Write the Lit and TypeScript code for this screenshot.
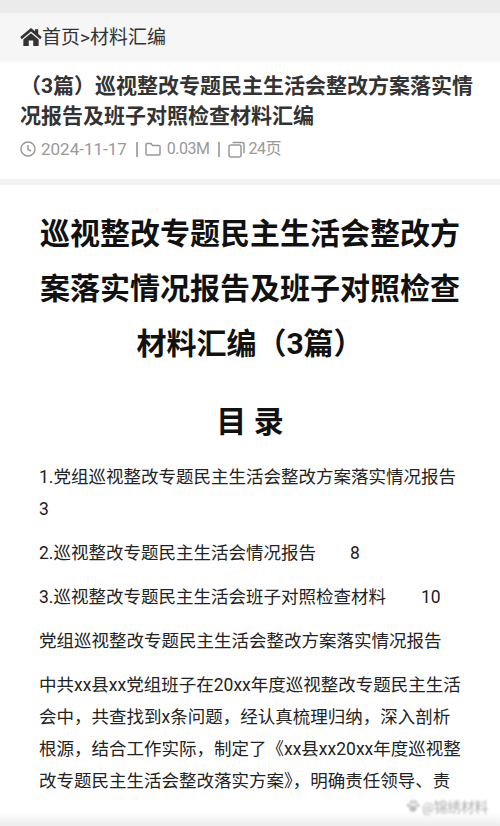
import { LitElement, html, css } from "lit";
import { customElement } from "lit/decorators.js";

@customElement("app-root")
export class AppRoot extends LitElement {
  static styles = css`
    :host {
      display: block;
      width: 500px;
      height: 826px;
      overflow: hidden;
      position: relative;
      background: #fff;
      font-family: Roboto, "Noto Sans CJK SC", sans-serif;
    }
    .top { height: 13px; background: #ebebeb; }
    .crumb {
      height: 49px;
      box-sizing: border-box;
      background: #f6f6f6;
      display: flex;
      align-items: center;
      padding: 0 0 0 20px;
      font-size: 19px;
      line-height: 24px;
      color: #333;
    }
    .crumb svg { width: 22px; height: 18px; fill: #333; margin-top: -2px; }
    .head { padding: 9px 20px 0; height: 117px; box-sizing: border-box; }
    h1 {
      margin: 0;
      font-size: 21px;
      line-height: 30px;
      font-weight: 700;
      color: #333;
    }
    .meta {
      display: flex;
      align-items: center;
      margin-top: 7px;
      font-size: 17px;
      line-height: 22px;
      color: #999;
      height: 22px;
    }
    .meta svg { fill: none; stroke: #999; stroke-width: 1.5; flex: none; }
    .date { margin-left: 5px; }
    .small { margin-left: 6px; font-size: 16px; letter-spacing: -0.5px; }
    .pages { margin-left: 4px; }
    .sep { width: 2px; height: 15px; background: #aaa; margin: 0 7px 0 9px; }
    .sep2 { margin: 0 8px; }
    .gap { height: 6px; background: #f2f2f2; }
    .doc { padding: 21px 39px 0 39px; color: #111; }
    h2 {
      margin: 0;
      text-align: center;
      font-size: 30px;
      line-height: 55px;
      font-weight: 700;
    }
    h3 {
      margin: 29px 0 17px;
      text-align: center;
      font-size: 30px;
      line-height: 44px;
      font-weight: 700;
    }
    p { margin: 0 0 12px; font-size: 17.5px; line-height: 32px; color: #222; }
    .tab8 { margin-left: 34px; }
    .tab10 { margin-left: 35px; }
    .mark {
      position: absolute;
      right: 12px;
      bottom: 10px;
      display: flex;
      align-items: center;
      gap: 2px;
      font-size: 13.5px;
      color: #aaa;
      filter: blur(0.9px);
    }
    .mark svg { width: 14px; height: 14px; fill: #bbb; }
    .fade {
      position: absolute;
      left: 0;
      right: 0;
      bottom: 0;
      height: 14px;
      background: linear-gradient(#fff, #ededed);
    }
  `;

  render() {
    return html`
      <div class="top"></div>
      <div class="crumb">
        <svg viewBox="0 0 24 20"><path d="M12 0 0 10l1.8 2.4L12 3.8l10.2 8.6L24 10l-4-3.4V1.5h-3.5v2.1zM3.5 12.8 12 5.8l8.5 7V20h-6v-6h-5v6h-6z"/></svg>
        <span>首页&gt;材料汇编</span>
      </div>
      <div class="head">
        <h1>（3篇）巡视整改专题民主生活会整改方案落实情况报告及班子对照检查材料汇编</h1>
        <div class="meta">
          <svg width="16" height="16" viewBox="0 0 16 16"><circle cx="8" cy="8" r="7"/><path d="M8 4v4.5l3 1.5"/></svg>
          <span class="date">2024-11-17</span>
          <i class="sep"></i>
          <svg width="16" height="14" viewBox="0 0 16 14"><path d="M1 2.5a1 1 0 0 1 1-1h4l1.5 2H14a1 1 0 0 1 1 1V12a1 1 0 0 1-1 1H2a1 1 0 0 1-1-1z"/></svg>
          <span class="small">0.03M</span>
          <i class="sep sep2"></i>
          <svg width="17" height="17" viewBox="0 0 17 17"><rect x="1" y="4" width="12" height="12" rx="2"/><path d="M4.5 1.5H14a2 2 0 0 1 2 2V12"/></svg>
          <span class="small pages">24页</span>
        </div>
      </div>
      <div class="gap"></div>
      <div class="doc">
        <h2>巡视整改专题民主生活会整改方案落实情况报告及班子对照检查材料汇编（3篇）</h2>
        <h3>目 录</h3>
        <p>1.党组巡视整改专题民主生活会整改方案落实情况报告 3</p>
        <p>2.巡视整改专题民主生活会情况报告<span class="tab8">8</span></p>
        <p>3.巡视整改专题民主生活会班子对照检查材料<span class="tab10">10</span></p>
        <p>党组巡视整改专题民主生活会整改方案落实情况报告</p>
        <p>中共xx县xx党组班子在20xx年度巡视整改专题民主生活会中，共查找到x条问题，经认真梳理归纳，深入剖析根源，结合工作实际，制定了《xx县xx20xx年度巡视整改专题民主生活会整改落实方案》，明确责任领导、责</p>
      </div>
      <div class="fade"></div>
      <div class="mark">
        <svg viewBox="0 0 16 16"><circle cx="3" cy="7" r="2"/><circle cx="6.5" cy="3.5" r="2"/><circle cx="10.5" cy="3.5" r="2"/><circle cx="13.5" cy="7" r="2"/><ellipse cx="8" cy="11" rx="4" ry="3.5"/></svg>
        <span>@锦绣材料</span>
      </div>
    `;
  }
}
